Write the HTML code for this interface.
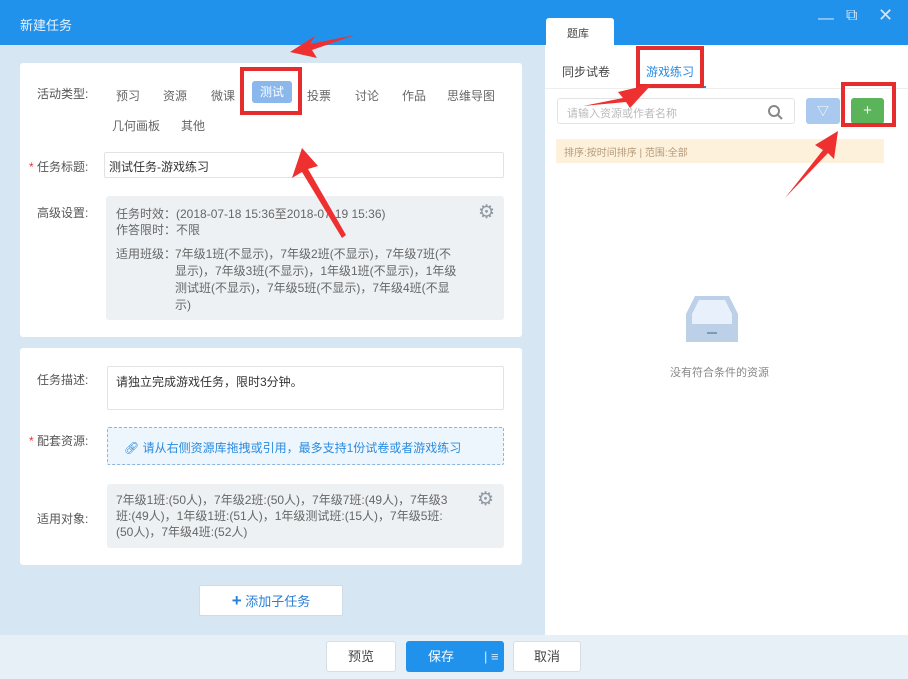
<!DOCTYPE html>
<html><head><meta charset="utf-8"><style>
*{margin:0;padding:0;box-sizing:border-box}
body{width:908px;height:679px;overflow:hidden;position:relative;font-family:"Liberation Sans","Noto Sans CJK SC",sans-serif;font-size:12px;color:#555;background:#d6e6f2}
.a{position:absolute}
.card{position:absolute;background:#fff;border-radius:3px}
.lbl{position:absolute;color:#555;font-size:12px}
.t{position:absolute;color:#666;font-size:12px}
</style></head><body>
<div class="a" style="left:0;top:0;width:908px;height:45px;background:#2192ec"></div>
<div class="a" style="left:20px;top:15px;color:#e8f3ff;font-size:13px">新建任务</div>
<div class="a" style="left:818px;top:10px;color:#cfe6fb;font-size:16px">—</div>
<div class="a" style="left:846px;top:7px;color:#cfe6fb;font-size:16px">⧉</div>
<div class="a" style="left:878px;top:5px;color:#cfe6fb;font-size:18px">✕</div>
<div class="a" style="left:546px;top:18px;width:68px;height:28px;background:#fff;border-radius:3px 3px 0 0"></div>
<div class="a" style="left:567px;top:25px;color:#444;font-size:11px">题库</div>

<div class="card" style="left:20px;top:63px;width:502px;height:274px"></div>
<div class="lbl" style="left:37px;top:85px">活动类型:</div>
<div class="t" style="left:116px;top:87px">预习</div>
<div class="t" style="left:163px;top:87px">资源</div>
<div class="t" style="left:211px;top:87px">微课</div>
<div class="a" style="left:252px;top:81px;width:40px;height:22px;background:#8ab8ec;border-radius:3px;color:#fff;text-align:center;line-height:22px">测试</div>
<div class="t" style="left:307px;top:87px">投票</div>
<div class="t" style="left:355px;top:87px">讨论</div>
<div class="t" style="left:402px;top:87px">作品</div>
<div class="t" style="left:447px;top:87px">思维导图</div>
<div class="t" style="left:112px;top:117px">几何画板</div>
<div class="t" style="left:181px;top:117px">其他</div>
<div class="lbl" style="left:29px;top:158px"><span style="color:#e33">*</span> 任务标题:</div>
<div class="a" style="left:104px;top:152px;width:400px;height:26px;border:1px solid #e3e3e3;border-radius:2px;padding:5px 4px;color:#333">测试任务-游戏练习</div>
<div class="lbl" style="left:37px;top:204px">高级设置:</div>
<div class="a" style="left:106px;top:196px;width:398px;height:124px;background:#eef1f4;border-radius:3px"></div>
<div class="t" style="left:116px;top:206px;line-height:16px">任务时效：(2018-07-18 15:36至2018-07-19 15:36)<br>作答限时：不限</div>
<div class="t" style="left:116px;top:246px;line-height:17px">适用班级：</div>
<div class="t" style="left:175px;top:246px;width:288px;line-height:17px">7年级1班(不显示)，7年级2班(不显示)，7年级7班(不显示)，7年级3班(不显示)，1年级1班(不显示)，1年级测试班(不显示)，7年级5班(不显示)，7年级4班(不显示)</div>
<div class="a" style="left:478px;top:201px;color:#8f99a4;font-size:19px">⚙</div>

<div class="card" style="left:20px;top:348px;width:502px;height:217px"></div>
<div class="lbl" style="left:37px;top:371px">任务描述:</div>
<div class="a" style="left:107px;top:366px;width:397px;height:44px;border:1px solid #e3e3e3;border-radius:2px;padding:6px 8px;color:#333">请独立完成游戏任务，限时3分钟。</div>
<div class="lbl" style="left:29px;top:432px"><span style="color:#e33">*</span> 配套资源:</div>
<div class="a" style="left:107px;top:427px;width:397px;height:38px;border:1px dashed #8ab6e0;background:#eef6fd;border-radius:2px;padding:11px 16px;color:#2a8be0">🔗︎ 请从右侧资源库拖拽或引用，最多支持1份试卷或者游戏练习</div>
<div class="lbl" style="left:37px;top:510px">适用对象:</div>
<div class="a" style="left:107px;top:484px;width:397px;height:64px;background:#eef1f4;border-radius:3px"></div>
<div class="t" style="left:116px;top:492px;width:342px;line-height:16px">7年级1班:(50人)，7年级2班:(50人)，7年级7班:(49人)，7年级3班:(49人)，1年级1班:(51人)，1年级测试班:(15人)，7年级5班:(50人)，7年级4班:(52人)</div>
<div class="a" style="left:477px;top:488px;color:#8f99a4;font-size:19px">⚙</div>
<div class="a" style="left:199px;top:585px;width:144px;height:31px;background:#fff;border:1px solid #cfdbe6;border-radius:2px;color:#2a7fd6;text-align:center;line-height:29px;font-size:13px"><b style="font-size:17px">+</b> 添加子任务</div>

<div class="a" style="left:545px;top:45px;width:363px;height:590px;background:#fff"></div>
<div class="a" style="left:562px;top:63px;color:#444">同步试卷</div>
<div class="a" style="left:646px;top:63px;color:#2a8be0">游戏练习</div>
<div class="a" style="left:638px;top:86px;width:68px;height:2px;background:#2a8be0"></div>
<div class="a" style="left:545px;top:88px;width:363px;height:1px;background:#eee"></div>
<div class="a" style="left:557px;top:98px;width:238px;height:26px;border:1px solid #e3e3e3;border-radius:3px;padding:6px 9px;color:#bbb;font-size:11px">请输入资源或作者名称</div>
<svg class="a" style="left:767px;top:104px" width="16" height="16"><circle cx="7" cy="7" r="5" fill="none" stroke="#888" stroke-width="2"/><path d="M11 11 L15 15" stroke="#888" stroke-width="2"/></svg>
<div class="a" style="left:806px;top:98px;width:34px;height:26px;background:#a9c9ee;border-radius:3px;color:#fff;text-align:center;line-height:26px">▽</div>
<div class="a" style="left:851px;top:98px;width:33px;height:26px;background:#5bb35a;border-radius:3px;color:#fff;text-align:center;line-height:25px;font-size:15px">+</div>
<div class="a" style="left:556px;top:139px;width:328px;height:24px;background:#fdf1dc;padding:5px 8px;color:#b59a7a;font-size:10px">排序:按时间排序 | 范围:全部</div>
<svg class="a" style="left:683px;top:294px" width="58" height="50"><path d="M3 20 L12 2 H46 L55 20 V48 H3Z" fill="#bcd0e8"/><path d="M9 20 L16 6 H42 L49 20 V30 H9Z" fill="#e8f1fb"/><rect x="24" y="38" width="10" height="2" fill="#7c98bc"/></svg>
<div class="a" style="left:670px;top:364px;color:#888;font-size:11px">没有符合条件的资源</div>

<div class="a" style="left:0;top:635px;width:908px;height:44px;background:#e8f0f7"></div>
<div class="a" style="left:326px;top:641px;width:70px;height:31px;background:#fff;border:1px solid #d5dde5;border-radius:3px;text-align:center;line-height:29px;color:#444;font-size:13px">预览</div>
<div class="a" style="left:406px;top:641px;width:98px;height:31px;background:#2192ec;border-radius:3px;color:#fff;font-size:13px;line-height:31px"><span style="margin-left:22px">保存</span><span style="position:absolute;left:78px;top:0;opacity:.8">| ≡</span></div>
<div class="a" style="left:513px;top:641px;width:68px;height:31px;background:#fff;border:1px solid #d5dde5;border-radius:3px;text-align:center;line-height:29px;color:#444;font-size:13px">取消</div>

<div class="a" style="left:240px;top:67px;width:62px;height:48px;border:4px solid #e62d2d"></div>
<div class="a" style="left:636px;top:46px;width:68px;height:42px;border:4px solid #e62d2d"></div>
<div class="a" style="left:841px;top:82px;width:55px;height:45px;border:4px solid #e62d2d"></div>
<svg class="a" style="left:0;top:0" width="908" height="679">
<g fill="#ee3030">
<polygon points="355,35 310,44 315,36 290,52 317,58 312,50"/>
<polygon points="302,148 292,178 302,172 342,238 346,235 308,169 318,166"/>
<polygon points="652,84 618,92 623,98 583,106 626,102 630,108"/>
<polygon points="838,131 815,145 823,150 785,198 828,153 834,159"/>
</g></svg>
</body></html>
